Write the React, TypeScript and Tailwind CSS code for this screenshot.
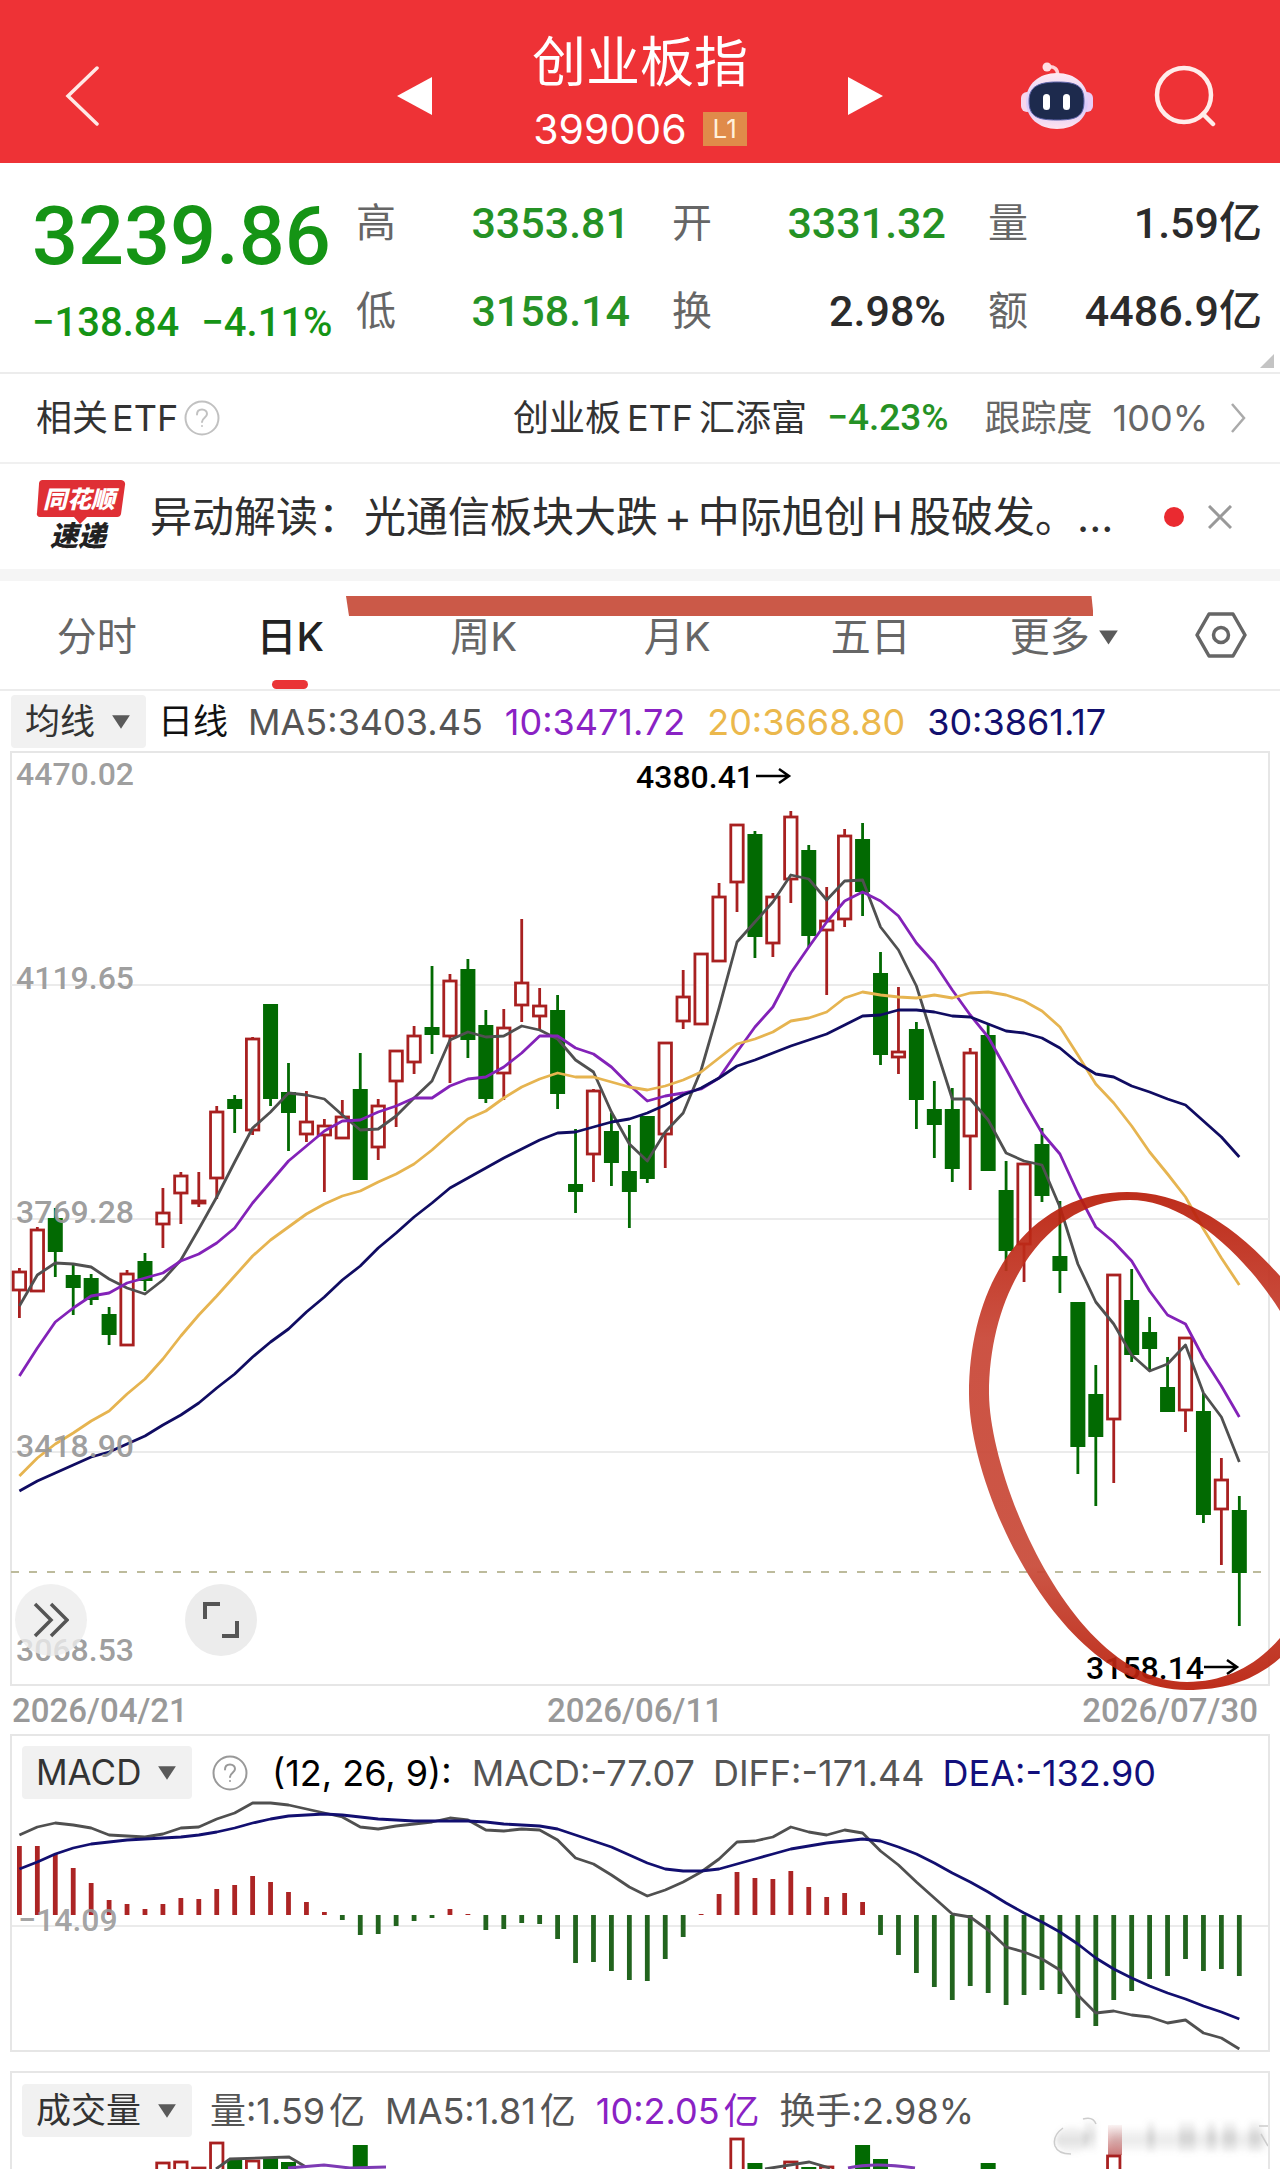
import React from 'react';

type Candle = [high: number, top: number, bottom: number, low: number, up: 0 | 1];

// First bar centre and distance between bars, shared by all three panels
const X0 = 19.4;
const STEP = 17.94;
const xAt = (i: number) => X0 + STEP * i;

const candles: Candle[] = [
  [1268, 1271, 1291, 1318, 1], [1227, 1229, 1292, 1292, 1], [1208, 1218, 1252, 1277, 0], [1264, 1275, 1288, 1315, 0],
  [1274, 1278, 1300, 1305, 0], [1307, 1314, 1335, 1345, 0], [1270, 1273, 1346, 1346, 1], [1253, 1261, 1281, 1291, 0],
  [1188, 1212, 1225, 1248, 1], [1172, 1175, 1194, 1224, 1], [1172, 1200, 1204, 1207, 1], [1106, 1111, 1179, 1199, 1],
  [1095, 1099, 1109, 1133, 0], [1037, 1038, 1131, 1135, 1], [1004, 1004, 1099, 1106, 0], [1063, 1092, 1113, 1151, 0],
  [1091, 1121, 1135, 1142, 1], [1119, 1125, 1136, 1192, 1], [1100, 1116, 1139, 1139, 1], [1053, 1089, 1180, 1180, 0],
  [1099, 1105, 1148, 1160, 1], [1050, 1050, 1082, 1127, 1], [1026, 1035, 1063, 1074, 1], [966, 1027, 1035, 1054, 0],
  [974, 980, 1037, 1083, 1], [959, 969, 1040, 1058, 0], [1010, 1025, 1099, 1103, 0], [1009, 1027, 1074, 1100, 1],
  [919, 982, 1006, 1022, 1], [988, 1005, 1017, 1030, 1], [995, 1010, 1094, 1109, 0], [1129, 1184, 1192, 1213, 0],
  [1089, 1090, 1155, 1182, 1], [1113, 1131, 1163, 1186, 0], [1125, 1171, 1192, 1228, 0], [1116, 1116, 1179, 1183, 0],
  [1042, 1042, 1135, 1168, 1], [970, 996, 1022, 1029, 1], [953, 953, 1025, 1025, 1], [883, 896, 962, 962, 1],
  [824, 824, 883, 912, 1], [831, 834, 937, 958, 0], [893, 896, 944, 957, 1], [811, 816, 880, 903, 1],
  [845, 850, 936, 947, 0], [887, 920, 931, 995, 1], [829, 835, 920, 927, 1], [823, 839, 892, 916, 0],
  [952, 973, 1055, 1065, 0], [987, 1051, 1058, 1074, 1], [1022, 1029, 1100, 1129, 0], [1081, 1109, 1125, 1158, 0],
  [1088, 1109, 1169, 1182, 0], [1048, 1052, 1137, 1190, 1], [1023, 1035, 1171, 1171, 0], [1161, 1190, 1251, 1271, 0],
  [1163, 1163, 1245, 1282, 1], [1128, 1144, 1196, 1202, 0], [1201, 1256, 1271, 1293, 0], [1302, 1302, 1447, 1474, 0],
  [1365, 1394, 1437, 1506, 0], [1274, 1274, 1420, 1483, 1], [1269, 1300, 1355, 1362, 0], [1317, 1332, 1349, 1370, 0],
  [1357, 1387, 1412, 1412, 0], [1337, 1337, 1411, 1432, 1], [1393, 1411, 1515, 1523, 0], [1458, 1479, 1510, 1565, 1],
  [1496, 1510, 1573, 1626, 0],
];

const ma5 = [
  1306, 1275, 1263, 1264, 1267, 1279, 1288, 1294, 1280, 1260, 1229, 1197, 1162, 1128, 1112, 1093, 1095, 1099, 1115, 1130,
  1129, 1116, 1098, 1081, 1040, 1032, 1037, 1036, 1026, 1030, 1039, 1060, 1072, 1112, 1144, 1161, 1132, 1113, 1070, 1008,
  942, 922, 902, 875, 879, 900, 881, 880, 927, 950, 986, 1043, 1099, 1099, 1120, 1153, 1161, 1165, 1207, 1264, 1302, 1324,
  1355, 1371, 1364, 1345, 1393, 1417, 1462,
];
const ma10 = [
  1376, 1348, 1322, 1308, 1296, 1293, 1283, 1278, 1273, 1261, 1254, 1243, 1228, 1203, 1182, 1161, 1146, 1131, 1121, 1120,
  1112, 1106, 1098, 1098, 1086, 1079, 1077, 1067, 1053, 1036, 1036, 1048, 1054, 1067, 1085, 1101, 1096, 1093, 1089, 1078,
  1052, 1027, 1007, 973, 947, 922, 901, 892, 901, 916, 943, 963, 990, 1015, 1037, 1069, 1102, 1133, 1154, 1193, 1227, 1242,
  1261, 1291, 1315, 1324, 1358, 1386, 1417,
];
const ma20 = [
  1476, 1458, 1444, 1433, 1421, 1411, 1394, 1379, 1359, 1336, 1315, 1296, 1276, 1256, 1240, 1227, 1214, 1204, 1196, 1191,
  1182, 1174, 1164, 1150, 1134, 1119, 1111, 1098, 1087, 1079, 1073, 1077, 1077, 1082, 1087, 1090, 1086, 1080, 1072, 1058,
  1044, 1039, 1032, 1021, 1018, 1012, 998, 992, 995, 997, 998, 995, 998, 993, 992, 995, 1001, 1011, 1027, 1055, 1084, 1103,
  1126, 1152, 1174, 1197, 1229, 1258, 1285,
];
const ma30 = [
  1491, 1481, 1473, 1465, 1457, 1452, 1444, 1436, 1425, 1415, 1403, 1388, 1374, 1357, 1342, 1329, 1312, 1297, 1280, 1266,
  1248, 1233, 1217, 1203, 1188, 1178, 1168, 1158, 1149, 1140, 1133, 1132, 1127, 1122, 1119, 1113, 1105, 1095, 1088, 1078,
  1066, 1060, 1053, 1046, 1040, 1034, 1025, 1016, 1015, 1010, 1010, 1012, 1016, 1017, 1024, 1031, 1033, 1038, 1048, 1063,
  1074, 1077, 1086, 1092, 1099, 1105, 1121, 1137, 1157,
];

// End of every MACD bar; anything above the zero line is red
const MACD_ZERO = 1915;
const macdBars = [
  1846, 1846, 1854, 1868, 1883, 1900, 1904, 1909, 1904, 1898, 1899, 1889, 1885, 1876, 1882, 1892, 1902, 1912, 1920, 1935,
  1934, 1926, 1921, 1918, 1909, 1914, 1930, 1929, 1923, 1924, 1939, 1963, 1962, 1971, 1980, 1981, 1959, 1937, 1914, 1894,
  1872, 1878, 1879, 1871, 1887, 1897, 1893, 1902, 1935, 1955, 1973, 1987, 2000, 1986, 1993, 2005, 1995, 1990, 1994, 2018,
  2026, 2000, 1991, 1979, 1976, 1959, 1971, 1969, 1976,
];
const diff = [
  1835, 1827, 1823, 1825, 1828, 1835, 1836, 1837, 1834, 1828, 1827, 1819, 1813, 1803, 1803, 1805, 1809, 1813, 1817, 1827,
  1829, 1826, 1824, 1822, 1818, 1820, 1830, 1831, 1829, 1830, 1840, 1858, 1864, 1875, 1887, 1896, 1890, 1882, 1872, 1859,
  1842, 1841, 1837, 1827, 1832, 1835, 1830, 1833, 1851, 1865, 1882, 1898, 1914, 1917, 1930, 1947, 1952, 1959, 1970, 1995,
  2013, 2011, 2015, 2017, 2023, 2020, 2033, 2038, 2049,
];
const dea = [
  1869, 1862, 1854, 1848, 1844, 1842, 1840, 1839, 1838, 1837, 1835, 1832, 1828, 1823, 1819, 1816, 1815, 1814, 1815, 1817,
  1819, 1820, 1821, 1821, 1821, 1821, 1822, 1824, 1825, 1826, 1829, 1835, 1841, 1847, 1855, 1863, 1869, 1871, 1871, 1869,
  1864, 1859, 1854, 1849, 1846, 1843, 1841, 1839, 1841, 1847, 1854, 1863, 1873, 1882, 1892, 1903, 1913, 1922, 1932, 1944,
  1958, 1969, 1978, 1986, 1993, 1999, 2006, 2012, 2019,
];

// [bar index, top, up]
const volumes: [number, number, 0 | 1][] = [
  [8, 2163, 1], [9, 2162, 1], [10, 2168, 1], [11, 2143, 1], [12, 2159, 0], [13, 2161, 1], [14, 2158, 0], [15, 2162, 0],
  [19, 2145, 0], [40, 2139, 1], [41, 2163, 0], [43, 2162, 1], [44, 2167, 0], [45, 2167, 1], [47, 2145, 0], [48, 2159, 0],
  [54, 2163, 0], [61, 2156, 1],
];

const RED = '#a82020';
const GREEN = '#026a02';

const Line: React.FC<{ data: number[]; color: string }> = ({ data, color }) => (
  <polyline
    points={data.map((y, i) => `${xAt(i)},${y}`).join(' ')}
    fill="none"
    stroke={color}
    strokeWidth={2.8}
    strokeLinejoin="round"
  />
);

const Caret: React.FC<{ className?: string }> = ({ className }) => (
  <svg className={className} viewBox="0 0 18 14" fill="#5a5a5a" aria-hidden="true">
    <path d="M1 1h16L9 13z" />
  </svg>
);

const Dropdown: React.FC<{ label: string; value: string }> = ({ label, value }) => (
  <div className="relative flex h-[53px] items-center rounded bg-[#f1f1f1]">
    <select
      aria-label={label}
      className="appearance-none bg-transparent pl-[14px] pr-[50px] text-[35px] leading-[53px] text-[#333] outline-none"
    >
      <option>{value}</option>
    </select>
    <Caret className="pointer-events-none absolute right-[15px] h-[16px] w-[20px]" />
  </div>
);

const Help: React.FC = () => (
  <svg className="h-9 w-9" viewBox="0 0 36 36" fill="none" stroke="#999" strokeWidth={2} aria-hidden="true">
    <circle cx="18" cy="18" r="16.500" />
    <path d="M13 14.500c0-3 2-5 5-5s5 2 5 4.600c0 3.500-5 3.900-5 7.900" strokeLinecap="round" />
    <circle cx="18" cy="26" r="1" fill="#999" stroke="none" />
  </svg>
);

const Header: React.FC = () => (
  <header className="grid h-[163px] grid-cols-[1fr_488px_1fr] items-center bg-[#ee3236] pt-7 text-white">
    <div className="pl-[64px]">
      <button aria-label="返回" className="block">
        <svg className="h-[60px] w-9" viewBox="0 0 36 60" fill="none" stroke="#ffe9e6" strokeWidth={3.500} strokeLinecap="round">
          <path d="M33 2L4 30l29 28" />
        </svg>
      </button>
    </div>
    <div className="flex items-center justify-between">
      <button aria-label="上一个">
        <svg className="h-[38px] w-[36px]" viewBox="0 0 36 38" fill="#fff"><path d="M36 0v38L1 19z" /></svg>
      </button>
      <div className="pb-2 text-center">
        <h1 className="text-[54px] leading-[60px]">创业板指</h1>
        <div className="mt-[14px] flex items-center justify-center gap-4">
          <span className="text-[41px] leading-[44px]">399006</span>
          <span className="bg-[#e08b4a] px-[10px] text-[26px] leading-[34px] text-[#fff0dc]">L1</span>
        </div>
      </div>
      <button aria-label="下一个">
        <svg className="h-[38px] w-[36px]" viewBox="0 0 36 38" fill="#fff"><path d="M0 0v38l35-19z" /></svg>
      </button>
    </div>
    <div className="flex items-center justify-end gap-[60px] pr-[64px]">
      <button aria-label="智能助手">
        <svg className="h-[68px] w-[74px]" viewBox="0 0 74 68">
          <defs>
            <linearGradient id="shell" x1="0" y1="0" x2="0" y2="1">
              <stop offset="0" stopColor="#ffeaf2" />
              <stop offset="0.6" stopColor="#d9c8fa" />
              <stop offset="1" stopColor="#ffe4ee" />
            </linearGradient>
          </defs>
          <path d="M28 5c6-1 10 2 9.500 8" fill="none" stroke="#ffd0d6" strokeWidth="3.500" />
          <circle cx="27" cy="5" r="4.500" fill="#ffdfe4" />
          <rect x="1" y="30" width="12" height="20" rx="6" fill="#f6d6ee" />
          <rect x="61" y="30" width="12" height="20" rx="6" fill="#e9cdf6" />
          <path d="M37 11C55 11 68 22 68 39S55 67 37 67 6 56 6 39 19 11 37 11z" fill="url(#shell)" />
          <path d="M37 20c20 0 27 4 27 19 0 16-8 19-27 19S9 55 9 39c0-14 9-19 28-19z" fill="#1d2a4d" stroke="#5b62a8" />
          <rect x="23" y="32" width="7" height="16" rx="3.500" fill="#fff" />
          <rect x="43" y="32" width="7" height="16" rx="3.500" fill="#fff" />
        </svg>
      </button>
      <button aria-label="搜索">
        <svg className="h-[62px] w-[62px]" viewBox="0 0 62 62" fill="none" stroke="#ffecea" strokeWidth={4.500} strokeLinecap="round">
          <circle cx="30" cy="30" r="27" />
          <path d="M49 49l10 10" />
        </svg>
      </button>
    </div>
  </header>
);

const stats = [
  { label: '高', value: '3353.81', down: true },
  { label: '开', value: '3331.32', down: true },
  { label: '量', value: '1.59亿', down: false },
  { label: '低', value: '3158.14', down: true },
  { label: '换', value: '2.98%', down: false },
  { label: '额', value: '4486.9亿', down: false },
];

const Quote: React.FC = () => (
  <section className="relative flex h-[211px] border-b-2 border-[#ececec] pl-8 pr-[18px] pt-8">
    <div className="w-[324px] shrink-0 font-['Roboto','Noto_Sans_CJK_SC',sans-serif] font-medium text-[#159415]">
      <div className="text-[81px] leading-[84px]">3239.86</div>
      <div className="mt-5 flex gap-[22px] whitespace-nowrap text-[40px] leading-[48px]">
        <span>−138.84</span>
        <span>−4.11%</span>
      </div>
    </div>
    <dl className="grid flex-1 grid-cols-3 content-start gap-x-[42px] gap-y-8">
      {stats.map((s) => (
        <div key={s.label} className="flex h-[56px] items-center justify-between whitespace-nowrap">
          <dt className="text-[40px] text-[#666]">{s.label}</dt>
          <dd className={`font-['Roboto','Noto_Sans_CJK_SC',sans-serif] text-[43px] font-medium ${s.down ? 'text-[#259225]' : 'text-[#2b2b2b]'}`}>
            {s.value}
          </dd>
        </div>
      ))}
    </dl>
    <svg className="absolute bottom-1 right-[6px] h-[14px] w-[14px]" viewBox="0 0 14 14" fill="#c4c4c4" aria-hidden="true">
      <path d="M14 0v14H0z" />
    </svg>
  </section>
);

const RelatedEtf: React.FC = () => (
  <a href="#etf" className="flex h-[90px] items-center justify-between border-b-2 border-[#f0f0f0] pl-9 pr-[34px] text-[36px] text-[#333]">
    <span className="flex items-center gap-[6px]">
      <span>相关<span className="ml-1">ETF</span></span>
      <span className="opacity-60"><Help /></span>
    </span>
    <span className="flex items-center">
      <span>创业板<span className="mx-[6px]">ETF</span>汇添富</span>
      <span className="ml-5 font-['Roboto',sans-serif] text-[37px] font-medium text-[#259225]">−4.23%</span>
      <span className="ml-9 text-[#666]">跟踪度</span>
      <span className="ml-5 text-[#666]">100%</span>
      <svg className="ml-[22px] h-[30px] w-4" viewBox="0 0 16 30" fill="none" stroke="#aaa" strokeWidth={2.500}>
        <path d="M2 1l12 14L2 29" />
      </svg>
    </span>
  </a>
);

const News: React.FC = () => (
  <section className="flex h-[117px] items-center border-b-[12px] border-[#f5f5f5] pl-9 pr-12">
    <svg className="h-[76px] w-[92px] shrink-0" viewBox="0 0 92 76" role="img" aria-label="同花顺速递">
      <path d="M6 1h79a4 4 0 0 1 4 5l-4 29a4 4 0 0 1-4 3H51l-7 7-6-7H4a3 3 0 0 1-3-4L3 5a4 4 0 0 1 3-4z" fill="#df2f35" />
      <text x="43" y="29" textAnchor="middle" className="font-['Noto_Sans_CJK_SC',sans-serif] text-[24px] font-black italic" fill="#fff">同花顺</text>
      <text x="42" y="67" textAnchor="middle" className="font-['Noto_Sans_CJK_SC',sans-serif] text-[28px] font-black italic" fill="#222">速递</text>
    </svg>
    <a href="#news" className="ml-[22px] min-w-0 flex-1 whitespace-nowrap text-[42px] text-[#2f2f2f]">
      异动解读：<span className="ml-1">光通信板块大跌</span><span className="mx-[6px]">+</span>中际旭创<span className="mx-[6px]">H</span>股破发。...
    </a>
    <span className="h-5 w-5 rounded-full bg-[#ea2a30]" />
    <button aria-label="关闭" className="ml-6">
      <svg className="h-6 w-6" viewBox="0 0 24 24" stroke="#999" strokeWidth={3}><path d="M1 1l22 22M23 1L1 23" /></svg>
    </button>
  </section>
);

const tabs = ['分时', '日K', '周K', '月K', '五日', '更多'];

const Tabs: React.FC = () => (
  <nav className="relative grid h-[110px] grid-cols-[repeat(6,1fr)_119px] border-b-2 border-[#ececec] text-[40px]">
    {tabs.map((tab) => (
      <button
        key={tab}
        className={`relative flex items-center justify-center gap-2 pt-1 ${tab === '日K' ? 'font-medium text-[#222]' : 'text-[#666]'}`}
      >
        {tab}
        {tab === '更多' && <Caret className="h-[17px] w-[21px]" />}
        {tab === '日K' && <span className="absolute bottom-0 h-[9px] w-9 rounded-full bg-[#ea3436]" />}
      </button>
    ))}
    <button aria-label="设置" className="flex items-center justify-center">
      <svg className="h-[46px] w-[52px]" viewBox="0 0 52 46" fill="none" stroke="#666" strokeWidth={3.500} strokeLinejoin="round">
        <path d="M14 2h24l12 21-12 21H14L2 23z" />
        <circle cx="26" cy="23" r="7.500" />
      </svg>
    </button>
    {/* Marker stroke over the tabs */}
    <svg className="pointer-events-none absolute left-[27%] top-[15px] h-5 w-[58.4%]" viewBox="0 0 747 20" preserveAspectRatio="none" aria-hidden="true">
      <path d="M0 0h745l2 20H3z" fill="#cb5948" />
    </svg>
  </nav>
);

const KLine: React.FC = () => (
  <section>
    <div className="flex h-[61px] items-center whitespace-nowrap pl-[11px] text-[36px]">
      <Dropdown label="主图指标" value="均线" />
      <span className="ml-3 text-[35px] text-[#111]">日线</span>
      <span className="ml-5 text-[#555]">MA5:3403.45</span>
      <span className="ml-[22px] text-[#8a22c4]">10:3471.72</span>
      <span className="ml-[22px] text-[#ebb84c]">20:3668.80</span>
      <span className="ml-[22px] text-[#12106e]">30:3861.17</span>
    </div>
    <div className="relative">
      <svg className="block w-full overflow-visible" viewBox="0 752 1280 934" role="img" aria-label="日K线图">
        <defs>
          <linearGradient id="marker" x1="0" y1="0" x2="0" y2="1">
            <stop offset="0" stopColor="#b81c08" />
            <stop offset="0.3" stopColor="#c84434" />
            <stop offset="0.75" stopColor="#c84836" />
            <stop offset="1" stopColor="#b81c08" />
          </linearGradient>
        </defs>
        <rect x="11" y="752" width="1258" height="933" fill="none" stroke="#e6e6e6" strokeWidth="2" />
        {[985, 1219, 1452].map((y) => (
          <path key={y} d={`M11 ${y}H1269`} stroke="#ebebeb" strokeWidth="2" />
        ))}
        <path d="M11 1572H1269" stroke="#bdbb9c" strokeWidth="2" strokeDasharray="8 10" />
        {candles.map(([high, top, bottom, low, up], i) => (
          <g key={i} stroke={up ? RED : GREEN} strokeWidth="2.800">
            <path d={`M${xAt(i)} ${high}V${top}M${xAt(i)} ${bottom}V${low}`} />
            {up ? (
              <rect x={xAt(i) - 6.200} y={top + 1} width="12.400" height={Math.max(bottom - top - 2, 1)} fill="#fff" />
            ) : (
              <rect x={xAt(i) - 7.500} y={top} width="15" height={bottom - top} fill={GREEN} stroke="none" />
            )}
          </g>
        ))}
        <Line data={ma5} color="#505050" />
        <Line data={ma10} color="#8322b8" />
        <Line data={ma20} color="#e6b450" />
        <Line data={ma30} color="#100c62" />
        <g className="font-['Roboto',sans-serif] text-[32px] font-medium" fill="#999" fillOpacity="0.95">
          <text x="16" y="785">4470.02</text>
          <text x="16" y="989">4119.65</text>
          <text x="16" y="1223">3769.28</text>
          <text x="16" y="1457">3418.90</text>
          <text x="16" y="1661">3068.53</text>
        </g>
        <g className="font-['Roboto',sans-serif] text-[32px] font-medium" fill="#000">
          <text x="636" y="788">4380.41</text>
          <text x="1086" y="1679">3158.14</text>
        </g>
        <path d="M756 776h33M779 769l10 7-10 7M1204 1667h33M1227 1660l10 7-10 7" fill="none" stroke="#000" strokeWidth="2.500" />
        {/* Hand drawn ring round the last bars, runs off the right edge */}
        <path
          fill="url(#marker)"
          fillOpacity="0.92"
          d="M1280 1276C1232 1222 1182 1192 1127 1192C1030 1192 969 1280 969 1394C969 1490 1060 1690 1187 1690C1226 1690 1255 1680 1280 1658V1638C1255 1667 1224 1682 1187 1682C1072 1682 990 1480 989 1394C989 1285 1050 1200 1130 1200C1180 1200 1238 1245 1280 1311z"
        />
      </svg>
      <div className="absolute bottom-[30px] left-[15px] flex gap-[98px]">
        <button aria-label="展开" className="flex h-[72px] w-[72px] items-center justify-center rounded-full bg-[#ececec]/80">
          <svg className="h-9 w-9" viewBox="0 0 36 36" fill="none" stroke="#555" strokeWidth={3.500}>
            <path d="M2 2l16 16L2 34M18 2l16 16-16 16" />
          </svg>
        </button>
        <button aria-label="全屏" className="flex h-[72px] w-[72px] items-center justify-center rounded-full bg-[#ececec]">
          <svg className="h-9 w-9" viewBox="0 0 36 36" fill="none" stroke="#555" strokeWidth={4}>
            <path d="M2 17V2h15M34 19v15H19" />
          </svg>
        </button>
      </div>
    </div>
    <div className="grid h-[48px] grid-cols-3 items-center pl-3 pr-[22px] font-['Roboto',sans-serif] text-[33px] font-medium text-[#999]">
      <span>2026/04/21</span>
      <span className="text-center">2026/06/11</span>
      <span className="text-right">2026/07/30</span>
    </div>
  </section>
);

const Macd: React.FC = () => (
  <section className="mx-[10px] border-2 border-[#e6e6e6]">
    <div className="flex h-[65px] items-center whitespace-nowrap pl-[10px] pt-3 pb-1 text-[36px] text-[#555]">
      <Dropdown label="副图指标" value="MACD" />
      <button aria-label="指标说明" className="ml-5"><Help /></button>
      <span className="ml-6 text-black">(12, 26, 9):</span>
      <span className="ml-5">MACD:-77.07</span>
      <span className="ml-[18px]">DIFF:-171.44</span>
      <span className="ml-[18px] text-[#120f7c]">DEA:-132.90</span>
    </div>
    <svg className="block w-full" viewBox="12 1801 1256 249" role="img" aria-label="MACD">
      <path d="M11 1926H1269" stroke="#ebebeb" strokeWidth="2" />
      {macdBars.map((y, i) => (
        <path key={i} d={`M${xAt(i)} ${MACD_ZERO}V${y}`} stroke={y < MACD_ZERO ? '#ac2424' : '#22641e'} strokeWidth="4.800" />
      ))}
      <Line data={diff} color="#505050" />
      <Line data={dea} color="#120f70" />
      <text x="18" y="1931" className="font-['Roboto',sans-serif] text-[32px] font-medium" fill="#999" fillOpacity="0.9">−14.09</text>
    </svg>
  </section>
);

const Volume: React.FC = () => (
  <section className="relative mx-[10px] mt-[19px] border-2 border-b-0 border-[#e6e6e6]">
    <div className="flex h-[63px] items-center whitespace-nowrap pl-[10px] pt-3 text-[36px] text-[#555]">
      <Dropdown label="副图指标" value="成交量" />
      <span className="ml-[18px]">量:1.59<span className="ml-1">亿</span></span>
      <span className="ml-5">MA5:1.81<span className="ml-1">亿</span></span>
      <span className="ml-5 text-[#8a22c4]">10:2.05<span className="ml-1">亿</span></span>
      <span className="ml-5">换手:2.98%</span>
    </div>
    <svg className="block w-full" viewBox="12 2136 1256 33" role="img" aria-label="成交量">
      {volumes.map(([i, top, up]) =>
        up ? (
          <rect key={i} x={xAt(i) - 6.200} y={top} width="12.400" height="60" fill="#fff" stroke={RED} strokeWidth="2.800" />
        ) : (
          <rect key={i} x={xAt(i) - 7.500} y={top} width="15" height="60" fill={GREEN} />
        ),
      )}
      <path d="M216 2169L230 2159L289 2157L306 2167M765 2169L809 2162L830 2168" fill="none" stroke="#505050" strokeWidth="2.800" />
      <path d="M288 2168L324 2165L350 2168L386 2167M848 2168Q874 2162 915 2168" fill="none" stroke="#7d3ab4" strokeWidth="3" />
    </svg>
    {/* Faded watermark */}
    <svg className="pointer-events-none absolute bottom-0 right-0 h-[60px] w-[226px]" viewBox="1041 2109 226 60" aria-hidden="true">
      <defs>
        <linearGradient id="fadeBar" x1="0" y1="0" x2="0" y2="1">
          <stop offset="0" stopColor="#a82020" stopOpacity="0.050" />
          <stop offset="1" stopColor="#a82020" stopOpacity="0.600" />
        </linearGradient>
        <linearGradient id="haze" x1="0" y1="0" x2="0" y2="1">
          <stop offset="0" stopColor="#888" stopOpacity="0.060" />
          <stop offset="0.5" stopColor="#888" stopOpacity="0.250" />
          <stop offset="1" stopColor="#888" stopOpacity="0.050" />
        </linearGradient>
        <filter id="soft"><feGaussianBlur stdDeviation="2.500" /></filter>
      </defs>
      <g filter="url(#soft)" fill="url(#haze)">
        <ellipse cx="1071" cy="2140" rx="16" ry="14" />
        <rect x="1083" y="2121" width="12" height="30" />
        <rect x="1110" y="2128" width="156" height="24" opacity="0.700" />
        <rect x="1146" y="2121" width="8" height="32" />
        <rect x="1178" y="2121" width="16" height="32" />
        <rect x="1206" y="2121" width="9" height="32" />
        <rect x="1222" y="2121" width="13" height="32" />
        <rect x="1248" y="2121" width="12" height="32" />
      </g>
      <path d="M1062 2128q-11 8-8 18 3 8 16 8M1082 2119q10-3 13 5M1258 2126h9M1260 2134l7 12" fill="none" stroke="#ccc" strokeWidth="1.500" />
      <rect x="1107" y="2125" width="14" height="30" fill="url(#fadeBar)" />
    </svg>
  </section>
);

export default function App() {
  return (
    <main className="w-full overflow-hidden bg-white font-['Inter','Noto_Sans_CJK_SC',sans-serif]">
      <Header />
      <Quote />
      <RelatedEtf />
      <News />
      <Tabs />
      <KLine />
      <Macd />
      <Volume />
    </main>
  );
}
